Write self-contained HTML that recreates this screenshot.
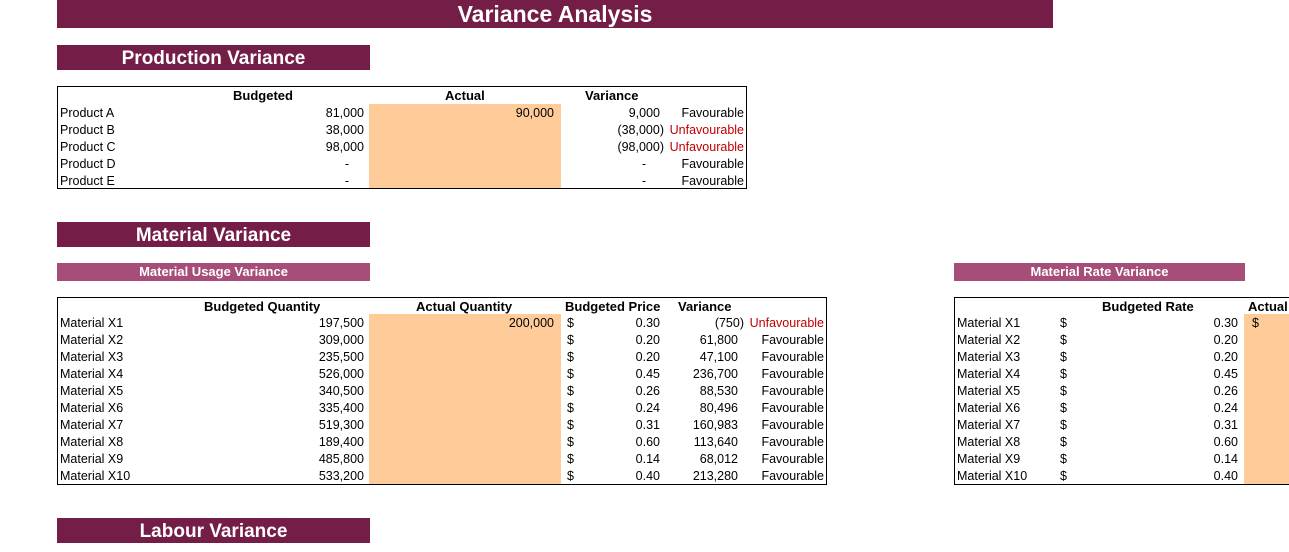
<!DOCTYPE html>
<html><head><meta charset="utf-8"><style>
body{margin:0;width:1289px;height:552px;position:relative;background:#fff;overflow:hidden;font-family:"Liberation Sans",Arial,sans-serif;font-size:12.5px;color:#000}
div{position:absolute;white-space:nowrap}
.bar{background:#741D47;color:#fff;font-weight:bold;text-align:center}
.sub{background:#A64D79;color:#fff;font-weight:bold;text-align:center;font-size:13px;line-height:18px;height:18px}
.box{border:1px solid #000;box-sizing:border-box}
.or{background:#FFCC99}
.row{left:0;width:1289px;height:17px;line-height:19px}
.row span{position:absolute;white-space:nowrap}
.b{font-weight:bold;font-size:13px}
.red{color:#C00000}
</style></head><body>
<div class="bar" style="left:57px;top:0;width:996px;height:28px;line-height:28px;font-size:23px">Variance Analysis</div>
<div class="bar" style="left:57px;top:45px;width:313px;height:25px;line-height:27px;font-size:19px">Production Variance</div>

<div class="or" style="left:369px;top:104px;width:192px;height:85px"></div>
<div class="box" style="left:57px;top:86px;width:690px;height:103px"></div>
<div class="row b" style="top:86px"><span style="left:233px">Budgeted</span><span style="left:445px">Actual</span><span style="left:585px">Variance</span></div>
<div class="row" style="top:104px"><span style="left:60px">Product A</span><span style="right:925px">81,000</span><span style="right:735px">90,000</span><span style="right:629px">9,000</span><span style="right:545px">Favourable</span></div>
<div class="row" style="top:121px"><span style="left:60px">Product B</span><span style="right:625px">(38,000)</span><span style="right:925px">38,000</span><span class="red" style="right:545px">Unfavourable</span></div>
<div class="row" style="top:138px"><span style="left:60px">Product C</span><span style="right:925px">98,000</span><span style="right:625px">(98,000)</span><span class="red" style="right:545px">Unfavourable</span></div>
<div class="row" style="top:155px"><span style="left:60px">Product D</span><span style="right:940px">-</span><span style="right:643px">-</span><span style="right:545px">Favourable</span></div>
<div class="row" style="top:172px"><span style="left:60px">Product E</span><span style="right:940px">-</span><span style="right:643px">-</span><span style="right:545px">Favourable</span></div>

<div class="bar" style="left:57px;top:222px;width:313px;height:25px;line-height:27px;font-size:19px">Material Variance</div>
<div class="sub" style="left:57px;top:263px;width:313px">Material Usage Variance</div>
<div class="sub" style="left:954px;top:263px;width:291px">Material Rate Variance</div>

<div class="or" style="left:369px;top:314px;width:192px;height:171px"></div>
<div class="box" style="left:57px;top:297px;width:770px;height:188px"></div>
<div class="or" style="left:1244px;top:314px;width:45px;height:171px"></div>
<div class="box" style="left:954px;top:297px;width:345px;height:188px"></div>

<div class="row b" style="top:297px"><span style="left:204px">Budgeted Quantity</span><span style="left:416px">Actual Quantity</span><span style="left:565px">Budgeted Price</span><span style="left:678px">Variance</span><span style="left:1102px">Budgeted Rate</span><span style="left:1248px">Actual</span></div>

<div class="row" style="top:314px"><span style="left:60px">Material X1</span><span style="right:925px">197,500</span><span style="right:735px">200,000</span><span style="left:567px">$</span><span style="right:629px">0.30</span><span style="right:545px">(750)</span><span class="red" style="right:465px">Unfavourable</span><span style="left:957px">Material X1</span><span style="left:1060px">$</span><span style="right:51px">0.30</span><span style="left:1252px">$</span></div>
<div class="row" style="top:331px"><span style="left:60px">Material X2</span><span style="right:925px">309,000</span><span style="left:567px">$</span><span style="right:629px">0.20</span><span style="right:551px">61,800</span><span style="right:465px">Favourable</span><span style="left:957px">Material X2</span><span style="left:1060px">$</span><span style="right:51px">0.20</span></div>
<div class="row" style="top:348px"><span style="left:60px">Material X3</span><span style="right:925px">235,500</span><span style="left:567px">$</span><span style="right:629px">0.20</span><span style="right:551px">47,100</span><span style="right:465px">Favourable</span><span style="left:957px">Material X3</span><span style="left:1060px">$</span><span style="right:51px">0.20</span></div>
<div class="row" style="top:365px"><span style="left:60px">Material X4</span><span style="right:925px">526,000</span><span style="left:567px">$</span><span style="right:629px">0.45</span><span style="right:551px">236,700</span><span style="right:465px">Favourable</span><span style="left:957px">Material X4</span><span style="left:1060px">$</span><span style="right:51px">0.45</span></div>
<div class="row" style="top:382px"><span style="left:60px">Material X5</span><span style="right:925px">340,500</span><span style="left:567px">$</span><span style="right:629px">0.26</span><span style="right:551px">88,530</span><span style="right:465px">Favourable</span><span style="left:957px">Material X5</span><span style="left:1060px">$</span><span style="right:51px">0.26</span></div>
<div class="row" style="top:399px"><span style="left:60px">Material X6</span><span style="right:925px">335,400</span><span style="left:567px">$</span><span style="right:629px">0.24</span><span style="right:551px">80,496</span><span style="right:465px">Favourable</span><span style="left:957px">Material X6</span><span style="left:1060px">$</span><span style="right:51px">0.24</span></div>
<div class="row" style="top:416px"><span style="left:60px">Material X7</span><span style="right:925px">519,300</span><span style="left:567px">$</span><span style="right:629px">0.31</span><span style="right:551px">160,983</span><span style="right:465px">Favourable</span><span style="left:957px">Material X7</span><span style="left:1060px">$</span><span style="right:51px">0.31</span></div>
<div class="row" style="top:433px"><span style="left:60px">Material X8</span><span style="right:925px">189,400</span><span style="left:567px">$</span><span style="right:629px">0.60</span><span style="right:551px">113,640</span><span style="right:465px">Favourable</span><span style="left:957px">Material X8</span><span style="left:1060px">$</span><span style="right:51px">0.60</span></div>
<div class="row" style="top:450px"><span style="left:60px">Material X9</span><span style="right:925px">485,800</span><span style="left:567px">$</span><span style="right:629px">0.14</span><span style="right:551px">68,012</span><span style="right:465px">Favourable</span><span style="left:957px">Material X9</span><span style="left:1060px">$</span><span style="right:51px">0.14</span></div>
<div class="row" style="top:467px"><span style="left:60px">Material X10</span><span style="right:925px">533,200</span><span style="left:567px">$</span><span style="right:629px">0.40</span><span style="right:551px">213,280</span><span style="right:465px">Favourable</span><span style="left:957px">Material X10</span><span style="left:1060px">$</span><span style="right:51px">0.40</span></div>

<div class="bar" style="left:57px;top:518px;width:313px;height:25px;line-height:27px;font-size:19px">Labour Variance</div>
</body></html>
